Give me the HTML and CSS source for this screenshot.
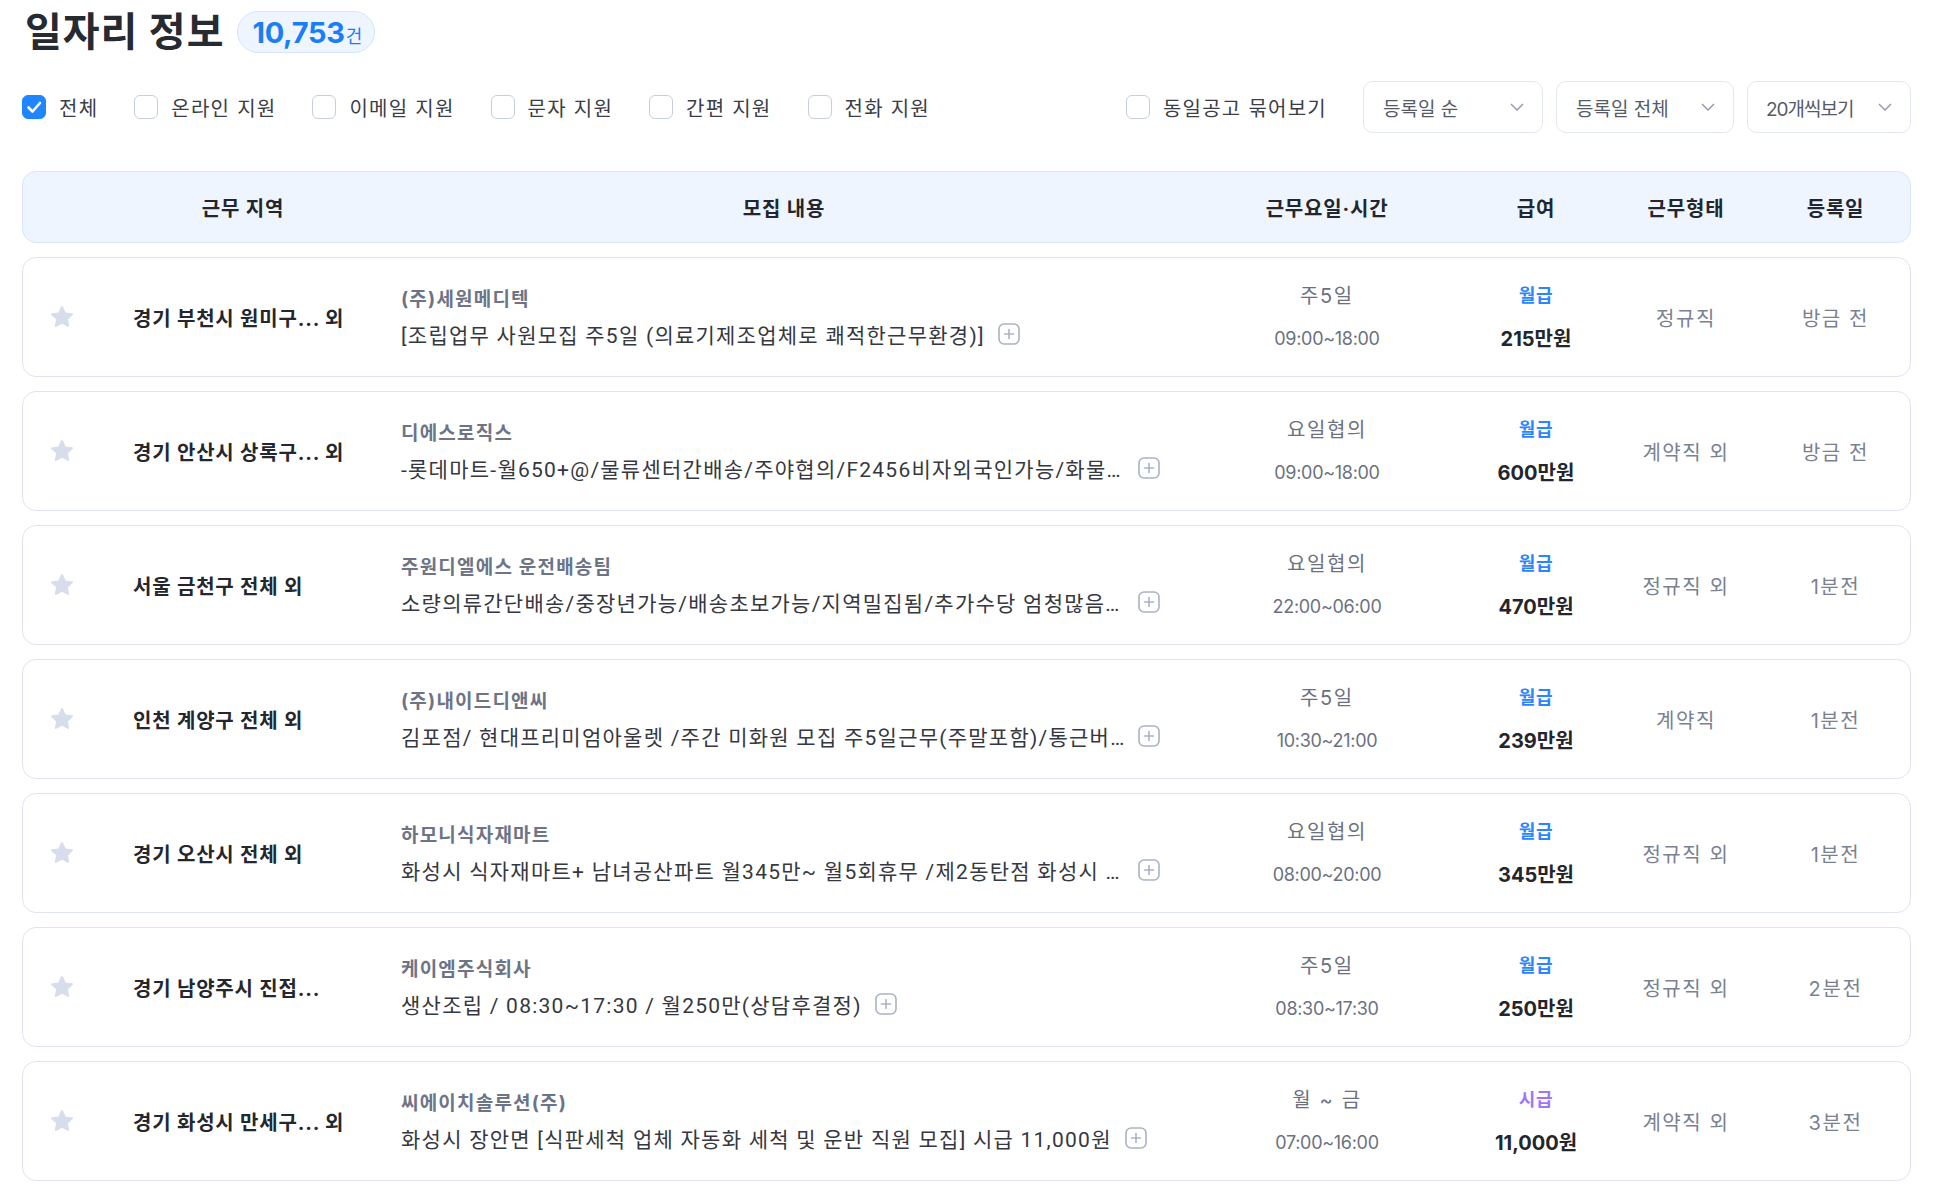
FILE: index.html
```html
<!DOCTYPE html>
<html lang="ko">
<head>
<meta charset="utf-8">
<title>일자리 정보</title>
<link rel="stylesheet" href="styles.css">
</head>
<body>
<div class="page">
  <div class="heading">
    <h1 class="title">일자리 정보</h1>
    <span class="badge"><b>10,753</b><small>건</small></span>
  </div>

  <div class="filters">
    <div class="checks">
      <label class="check"><span class="box on"><svg viewBox="0 0 24 24" width="24" height="24"><path d="M6.5 12.5l4 4 7.5-8.5" fill="none" stroke="#fff" stroke-width="2.6" stroke-linecap="round" stroke-linejoin="round"/></svg></span>전체</label>
      <label class="check"><span class="box"></span>온라인 지원</label>
      <label class="check"><span class="box"></span>이메일 지원</label>
      <label class="check"><span class="box"></span>문자 지원</label>
      <label class="check"><span class="box"></span>간편 지원</label>
      <label class="check"><span class="box"></span>전화 지원</label>
    </div>
    <div class="tools">
      <label class="check"><span class="box"></span>동일공고 묶어보기</label>
      <div class="select s1"><span>등록일 순</span><svg class="chev" viewBox="0 0 14 8" width="14" height="8"><path d="M1 1l6 6 6-6" fill="none" stroke="#8b94a6" stroke-width="1.3"/></svg></div>
      <div class="select s2"><span>등록일 전체</span><svg class="chev" viewBox="0 0 14 8" width="14" height="8"><path d="M1 1l6 6 6-6" fill="none" stroke="#8b94a6" stroke-width="1.3"/></svg></div>
      <div class="select s3"><span class="tight">20개씩보기</span><svg class="chev" viewBox="0 0 14 8" width="14" height="8"><path d="M1 1l6 6 6-6" fill="none" stroke="#8b94a6" stroke-width="1.3"/></svg></div>
    </div>
  </div>

  <div class="thead">
    <div class="th">근무 지역</div>
    <div class="th th-content">모집 내용</div>
    <div class="th">근무요일·시간</div>
    <div class="th">급여</div>
    <div class="th">근무형태</div>
    <div class="th">등록일</div>
  </div>

  <div class="rows">
    <div class="row">
      <div class="star"><svg viewBox="0 0 24 24" width="26" height="26"><path d="M12 2.8l2.8 5.9 6.4.8-4.7 4.4 1.2 6.4L12 17.2l-5.7 3.1 1.2-6.4-4.7-4.4 6.4-.8z" fill="#d7ddeb" stroke="#d7ddeb" stroke-width="1.8" stroke-linejoin="round"/></svg></div>
      <div class="loc">경기 부천시 원미구... 외</div>
      <div class="content">
        <div class="company">(주)세원메디텍</div>
        <div class="line"><span class="subject">[조립업무 사원모집 주5일 (의료기제조업체로 쾌적한근무환경)]</span><svg class="plus" viewBox="0 0 22 22" width="22" height="22"><rect x="1" y="1" width="20" height="20" rx="5" fill="none" stroke="#a9b3c6" stroke-width="1.6"/><path d="M11 6.5v9M6.5 11h9" stroke="#a9b3c6" stroke-width="1.6" stroke-linecap="round"/></svg></div>
      </div>
      <div class="days"><div class="d1">주5일</div><div class="d2">09:00~18:00</div></div>
      <div class="pay"><div class="p1 month">월급</div><div class="p2">215만원</div></div>
      <div class="type">정규직</div>
      <div class="date">방금 전</div>
    </div>

    <div class="row">
      <div class="star"><svg viewBox="0 0 24 24" width="26" height="26"><path d="M12 2.8l2.8 5.9 6.4.8-4.7 4.4 1.2 6.4L12 17.2l-5.7 3.1 1.2-6.4-4.7-4.4 6.4-.8z" fill="#d7ddeb" stroke="#d7ddeb" stroke-width="1.8" stroke-linejoin="round"/></svg></div>
      <div class="loc">경기 안산시 상록구... 외</div>
      <div class="content">
        <div class="company">디에스로직스</div>
        <div class="line"><span class="subject">-롯데마트-월650+@/물류센터간배송/주야협의/F2456비자외국인가능/화물차운전가능자우대</span><svg class="plus" viewBox="0 0 22 22" width="22" height="22"><rect x="1" y="1" width="20" height="20" rx="5" fill="none" stroke="#a9b3c6" stroke-width="1.6"/><path d="M11 6.5v9M6.5 11h9" stroke="#a9b3c6" stroke-width="1.6" stroke-linecap="round"/></svg></div>
      </div>
      <div class="days"><div class="d1">요일협의</div><div class="d2">09:00~18:00</div></div>
      <div class="pay"><div class="p1 month">월급</div><div class="p2">600만원</div></div>
      <div class="type">계약직 외</div>
      <div class="date">방금 전</div>
    </div>

    <div class="row">
      <div class="star"><svg viewBox="0 0 24 24" width="26" height="26"><path d="M12 2.8l2.8 5.9 6.4.8-4.7 4.4 1.2 6.4L12 17.2l-5.7 3.1 1.2-6.4-4.7-4.4 6.4-.8z" fill="#d7ddeb" stroke="#d7ddeb" stroke-width="1.8" stroke-linejoin="round"/></svg></div>
      <div class="loc">서울 금천구 전체 외</div>
      <div class="content">
        <div class="company">주원디엘에스 운전배송팀</div>
        <div class="line"><span class="subject">소량의류간단배송/중장년가능/배송초보가능/지역밀집됨/추가수당 엄청많음/주5일</span><svg class="plus" viewBox="0 0 22 22" width="22" height="22"><rect x="1" y="1" width="20" height="20" rx="5" fill="none" stroke="#a9b3c6" stroke-width="1.6"/><path d="M11 6.5v9M6.5 11h9" stroke="#a9b3c6" stroke-width="1.6" stroke-linecap="round"/></svg></div>
      </div>
      <div class="days"><div class="d1">요일협의</div><div class="d2">22:00~06:00</div></div>
      <div class="pay"><div class="p1 month">월급</div><div class="p2">470만원</div></div>
      <div class="type">정규직 외</div>
      <div class="date">1분전</div>
    </div>

    <div class="row">
      <div class="star"><svg viewBox="0 0 24 24" width="26" height="26"><path d="M12 2.8l2.8 5.9 6.4.8-4.7 4.4 1.2 6.4L12 17.2l-5.7 3.1 1.2-6.4-4.7-4.4 6.4-.8z" fill="#d7ddeb" stroke="#d7ddeb" stroke-width="1.8" stroke-linejoin="round"/></svg></div>
      <div class="loc">인천 계양구 전체 외</div>
      <div class="content">
        <div class="company">(주)내이드디앤씨</div>
        <div class="line"><span class="subject">김포점/ 현대프리미엄아울렛 /주간 미화원 모집 주5일근무(주말포함)/통근버스운행</span><svg class="plus" viewBox="0 0 22 22" width="22" height="22"><rect x="1" y="1" width="20" height="20" rx="5" fill="none" stroke="#a9b3c6" stroke-width="1.6"/><path d="M11 6.5v9M6.5 11h9" stroke="#a9b3c6" stroke-width="1.6" stroke-linecap="round"/></svg></div>
      </div>
      <div class="days"><div class="d1">주5일</div><div class="d2">10:30~21:00</div></div>
      <div class="pay"><div class="p1 month">월급</div><div class="p2">239만원</div></div>
      <div class="type">계약직</div>
      <div class="date">1분전</div>
    </div>

    <div class="row">
      <div class="star"><svg viewBox="0 0 24 24" width="26" height="26"><path d="M12 2.8l2.8 5.9 6.4.8-4.7 4.4 1.2 6.4L12 17.2l-5.7 3.1 1.2-6.4-4.7-4.4 6.4-.8z" fill="#d7ddeb" stroke="#d7ddeb" stroke-width="1.8" stroke-linejoin="round"/></svg></div>
      <div class="loc">경기 오산시 전체 외</div>
      <div class="content">
        <div class="company">하모니식자재마트</div>
        <div class="line"><span class="subject">화성시 식자재마트+ 남녀공산파트 월345만~ 월5회휴무 /제2동탄점 화성시 오산동</span><svg class="plus" viewBox="0 0 22 22" width="22" height="22"><rect x="1" y="1" width="20" height="20" rx="5" fill="none" stroke="#a9b3c6" stroke-width="1.6"/><path d="M11 6.5v9M6.5 11h9" stroke="#a9b3c6" stroke-width="1.6" stroke-linecap="round"/></svg></div>
      </div>
      <div class="days"><div class="d1">요일협의</div><div class="d2">08:00~20:00</div></div>
      <div class="pay"><div class="p1 month">월급</div><div class="p2">345만원</div></div>
      <div class="type">정규직 외</div>
      <div class="date">1분전</div>
    </div>

    <div class="row">
      <div class="star"><svg viewBox="0 0 24 24" width="26" height="26"><path d="M12 2.8l2.8 5.9 6.4.8-4.7 4.4 1.2 6.4L12 17.2l-5.7 3.1 1.2-6.4-4.7-4.4 6.4-.8z" fill="#d7ddeb" stroke="#d7ddeb" stroke-width="1.8" stroke-linejoin="round"/></svg></div>
      <div class="loc">경기 남양주시 진접...</div>
      <div class="content">
        <div class="company">케이엠주식회사</div>
        <div class="line"><span class="subject">생산조립 / 08:30~17:30 / 월250만(상담후결정)</span><svg class="plus" viewBox="0 0 22 22" width="22" height="22"><rect x="1" y="1" width="20" height="20" rx="5" fill="none" stroke="#a9b3c6" stroke-width="1.6"/><path d="M11 6.5v9M6.5 11h9" stroke="#a9b3c6" stroke-width="1.6" stroke-linecap="round"/></svg></div>
      </div>
      <div class="days"><div class="d1">주5일</div><div class="d2">08:30~17:30</div></div>
      <div class="pay"><div class="p1 month">월급</div><div class="p2">250만원</div></div>
      <div class="type">정규직 외</div>
      <div class="date">2분전</div>
    </div>

    <div class="row">
      <div class="star"><svg viewBox="0 0 24 24" width="26" height="26"><path d="M12 2.8l2.8 5.9 6.4.8-4.7 4.4 1.2 6.4L12 17.2l-5.7 3.1 1.2-6.4-4.7-4.4 6.4-.8z" fill="#d7ddeb" stroke="#d7ddeb" stroke-width="1.8" stroke-linejoin="round"/></svg></div>
      <div class="loc">경기 화성시 만세구... 외</div>
      <div class="content">
        <div class="company">씨에이치솔루션(주)</div>
        <div class="line"><span class="subject">화성시 장안면 [식판세척 업체 자동화 세척 및 운반 직원 모집] 시급 11,000원</span><svg class="plus" viewBox="0 0 22 22" width="22" height="22"><rect x="1" y="1" width="20" height="20" rx="5" fill="none" stroke="#a9b3c6" stroke-width="1.6"/><path d="M11 6.5v9M6.5 11h9" stroke="#a9b3c6" stroke-width="1.6" stroke-linecap="round"/></svg></div>
      </div>
      <div class="days"><div class="d1">월 ~ 금</div><div class="d2">07:00~16:00</div></div>
      <div class="pay"><div class="p1 hour">시급</div><div class="p2">11,000원</div></div>
      <div class="type">계약직 외</div>
      <div class="date">3분전</div>
    </div>
  </div>
</div>
</body>
</html>
```

FILE: styles.css
```css
* { box-sizing: border-box; }
html, body { margin: 0; padding: 0; background: #fff; }
body {
  font-family: Inter, "Noto Sans CJK KR", sans-serif;
  color: #333;
}
.page { padding: 11px 24px 0 22px; }

.heading { display: flex; align-items: center; height: 42px; }
.title {
  margin: 0 0 0 3px;
  font-size: 40px;
  font-weight: 700;
  color: #262a31;
  letter-spacing: 1px;
  line-height: 42px;
}
.badge {
  margin-left: 13px;
  height: 42px;
  padding: 0 12px 0 14px;
  display: inline-flex;
  align-items: center;
  background: #eef5ff;
  border: 1px solid #d6e6fc;
  border-radius: 21px;
  color: #1a7ef6;
}
.badge b { font-size: 29px; font-weight: 700; letter-spacing: -0.3px; }
.badge small { font-size: 18px; font-weight: 400; margin-left: 1px; margin-top: 5px; }

.filters {
  margin-top: 28px;
  height: 52px;
  display: flex;
  align-items: center;
}
.checks { display: flex; align-items: center; gap: 36px; }
.check {
  display: inline-flex;
  align-items: center;
  gap: 13px;
  font-size: 20px;
  letter-spacing: 1.25px;
  color: #3a3e46;
}
.box {
  width: 24px;
  height: 24px;
  border: 1.5px solid #c6cede;
  border-radius: 6px;
  background: #fff;
  display: inline-flex;
}
.box.on { background: #1f86ff; border-color: #1f86ff; }
.box.on svg { margin: -1.5px; }

.tools { margin-left: auto; display: flex; align-items: center; gap: 13px; }
.tools .check { margin-right: 23px; }
.select {
  height: 52px;
  border: 1px solid #e2e8f1;
  border-radius: 10px;
  display: flex;
  align-items: center;
  justify-content: space-between;
  padding: 0 18px 0 19px;
  font-size: 19px;
  color: #555b66;
}
.s1 { width: 180px; }
.s2 { width: 178px; }
.s3 { width: 164px; padding-left: 18px; }
.tight { letter-spacing: -1px; }

.thead {
  margin-top: 38px;
  height: 72px;
  background: #eef5ff;
  border: 1px solid #d8e7fb;
  border-radius: 14px;
  display: grid;
  grid-template-columns: 440px 1fr 268px 150px 150px 149px;
  align-items: center;
}
.th {
  text-align: center;
  font-size: 20px;
  font-weight: 700;
  color: #23262c;
  letter-spacing: 0.8px;
}
.th-content { padding-right: 88px; }

.rows { display: flex; flex-direction: column; gap: 14px; margin-top: 14px; }
.row {
  height: 120px;
  border: 1px solid #dfe4ee;
  border-radius: 14px;
  display: grid;
  grid-template-columns: 110px 268px 1fr 268px 150px 150px 149px;
  align-items: center;
}
.star { padding-left: 26px; display: flex; }
.loc { font-size: 20px; font-weight: 700; color: #24272d; white-space: nowrap; letter-spacing: 0.8px; }
.content { min-width: 0; }
.company {
  font-size: 19px;
  font-weight: 700;
  color: #6d7485;
  line-height: 26px;
  letter-spacing: 1.2px;
}
.line { display: flex; align-items: center; margin-top: 8px; height: 26px; }
.subject {
  font-family: Roboto, "Noto Sans CJK KR", sans-serif;
  font-size: 21px;
  color: #353840;
  white-space: nowrap;
  overflow: hidden;
  text-overflow: ellipsis;
  max-width: 724px;
  letter-spacing: 1.25px;
}
.plus { margin-left: 13px; flex: none; }

.days, .pay { text-align: center; }
.d1 { font-size: 20px; color: #6b7180; line-height: 26px; letter-spacing: 1.6px; }
.d2 { font-size: 18px; color: #6b7180; line-height: 24px; margin-top: 18px; letter-spacing: -0.3px; }
.p1 { font-size: 18px; font-weight: 700; line-height: 26px; letter-spacing: 0.6px; }
.month { color: #2a86ff; }
.hour { color: #a175f7; }
.p2 { font-size: 20px; font-weight: 700; color: #23262c; line-height: 24px; margin-top: 18px; letter-spacing: 0; }
.type, .date { text-align: center; font-size: 20px; color: #7a8191; letter-spacing: 1.6px; }
```
